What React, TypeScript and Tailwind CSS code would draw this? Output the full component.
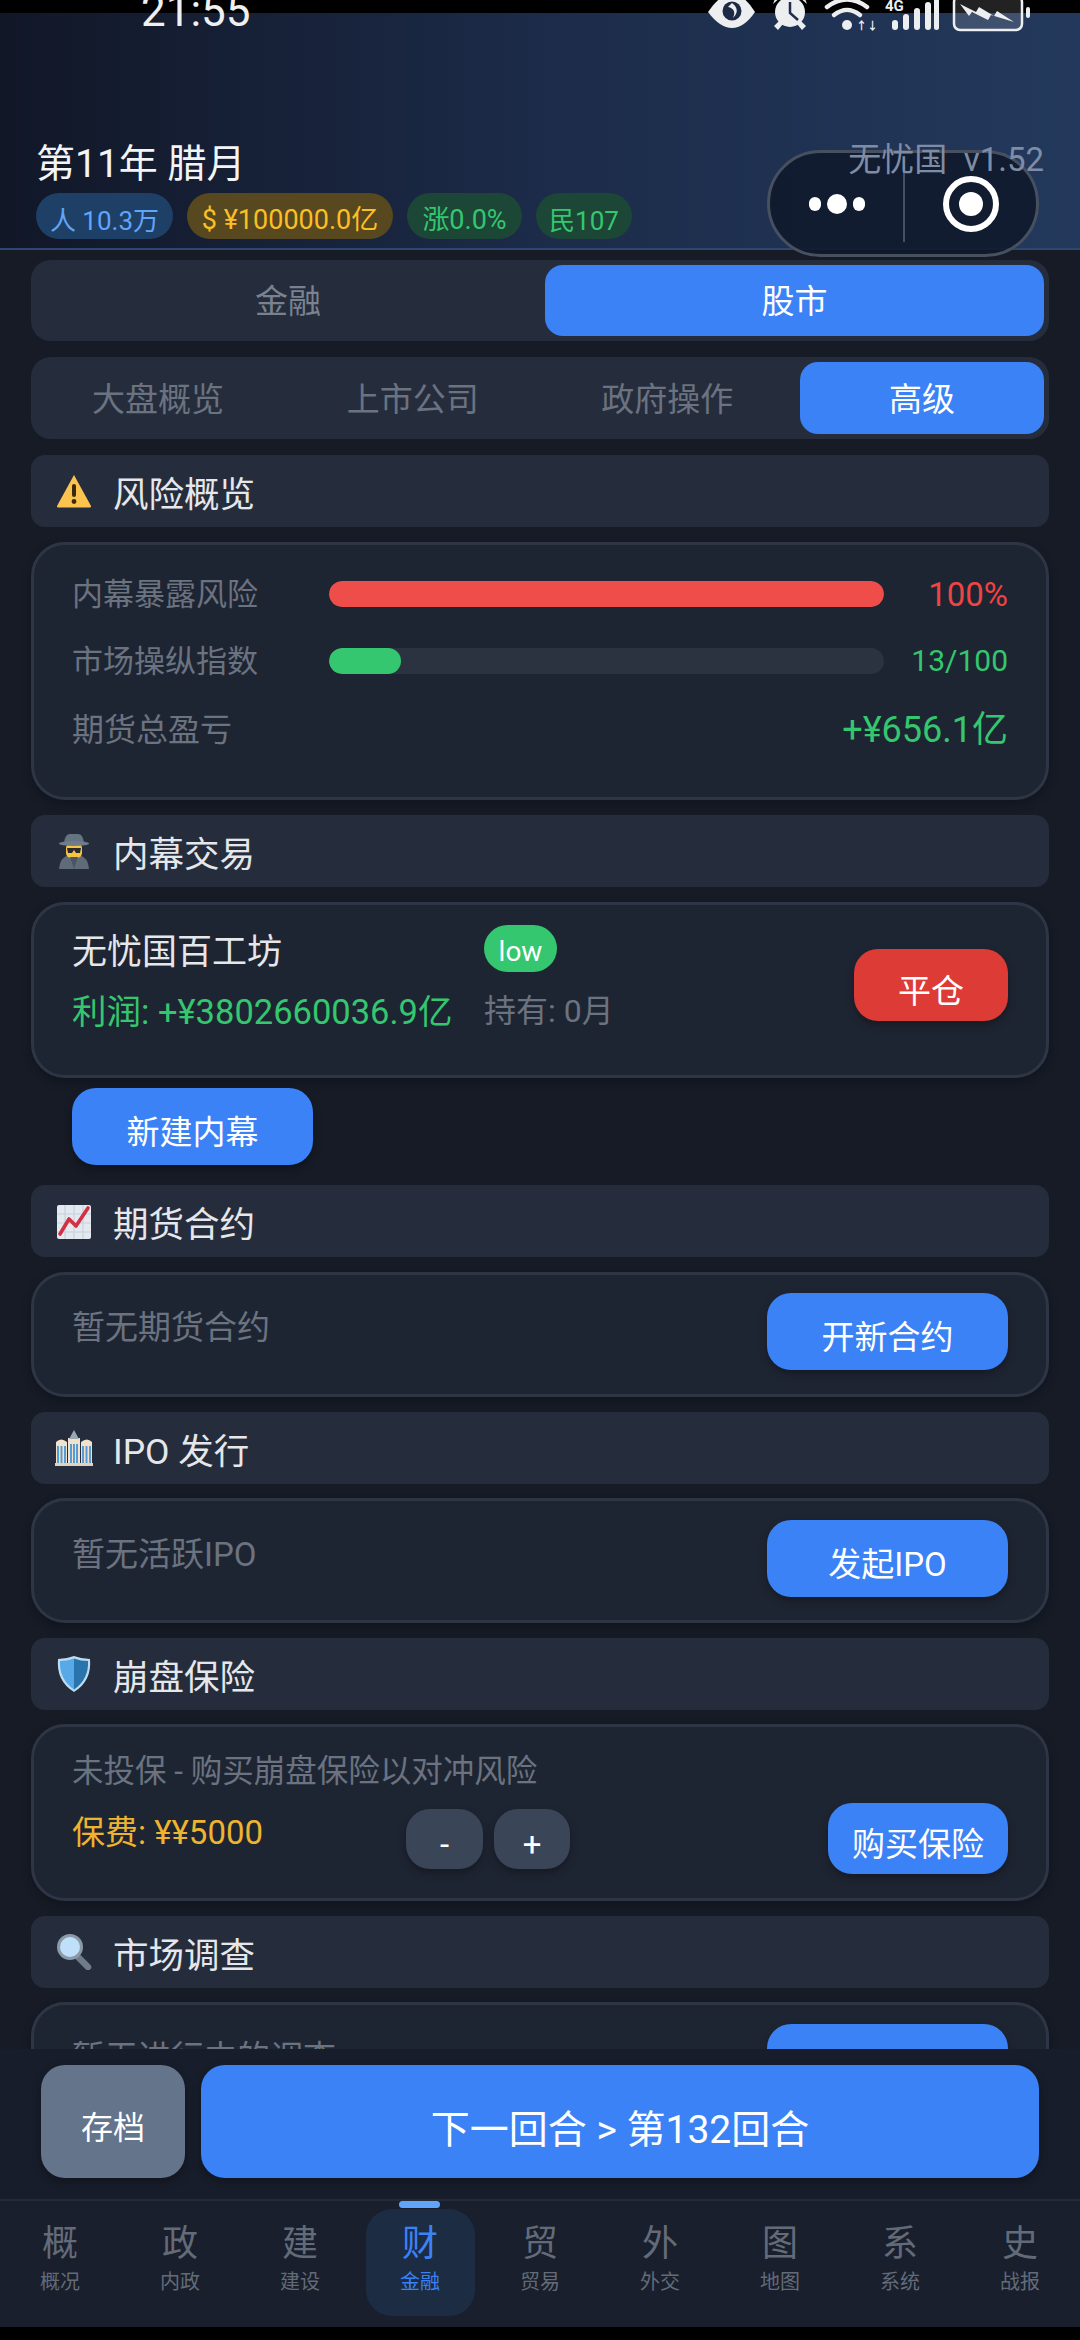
import React from "react";

const FONT = "font-['Roboto','Noto_Sans_CJK_SC',sans-serif]";

function Warn() {
  return (
    <svg width="36" height="36" viewBox="0 0 36 36" className="shrink-0">
      <path d="M18 2 L35 33 Q35.5 34.5 33.5 34.5 L2.5 34.5 Q.5 34.5 1 33 Z" fill="#fcc44f" />
      <rect x="16" y="11" width="4" height="13" rx="2" fill="#3a2a12" />
      <circle cx="18" cy="28.5" r="2.4" fill="#3a2a12" />
    </svg>
  );
}
function Spy() {
  return (
    <svg width="36" height="36" viewBox="0 0 36 36" className="shrink-0">
      <path d="M3 36 Q4 24 13 22 L23 22 Q32 24 33 36 Z" fill="#5f6b78" />
      <rect x="10" y="10" width="16" height="15" rx="5" fill="#f6c445" />
      <path d="M11 15 L25 15 L24 20 L20 20 L18 17 L16 20 L12 20 Z" fill="#2c2a28" />
      <path d="M8 10 Q9 1 14 1 L22 1 Q27 1 28 10 Z" fill="#667380" />
      <ellipse cx="18" cy="10.5" rx="15" ry="2.6" fill="#6f7c89" />
      <path d="M14 24 L22 24 L18 36 Z" fill="#4b5662" />
    </svg>
  );
}
function Chart() {
  return (
    <svg width="36" height="36" viewBox="0 0 36 36" className="shrink-0">
      <rect x="1" y="2" width="34" height="34" rx="2" fill="#e3e9ee" />
      <path d="M9 2V36M18 2V36M27 2V36M1 11H35M1 20H35M1 29H35" stroke="#c6d2dc" strokeWidth="1.2" />
      <path d="M4 31 L13 16 L20 23 L32 5" fill="none" stroke="#d32f45" strokeWidth="3.6" strokeLinejoin="round" strokeLinecap="round" />
    </svg>
  );
}
function Bank() {
  return (
    <svg width="38" height="36" viewBox="0 0 38 36" className="shrink-0">
      <path d="M1 12 Q6 7 12 12 L12 36 L1 36Z" fill="#f0e2cc" />
      <path d="M26 12 Q32 7 37 12 L37 36 L26 36Z" fill="#f0e2cc" />
      <rect x="13" y="8" width="12" height="28" fill="#f0e2cc" />
      <path d="M14 9 L19 0 L24 9 Z" fill="#9aa8b6" />
      <path d="M3 16V33M6.5 16V33M10 16V33M16 14V33M19 14V33M22 14V33M28 16V33M31.500 16V33M35 16V33" stroke="#5a9bd6" strokeWidth="2" />
      <rect x="0" y="33" width="38" height="3" fill="#e0d2bb" />
    </svg>
  );
}
function Shield() {
  return (
    <svg width="36" height="38" viewBox="0 0 36 38" className="shrink-0">
      <path d="M18 1 Q26 4 34 4 Q36 26 18 37 Q0 26 2 4 Q10 4 18 1Z" fill="#bcdcf2" />
      <path d="M18 3.500 Q11 6 4 6 Q3 24 18 34.500Z" fill="#58a9e8" />
      <path d="M18 3.500 Q25 6 32 6 Q33 24 18 34.500Z" fill="#2a74ad" />
    </svg>
  );
}
function Glass() {
  return (
    <svg width="38" height="36" viewBox="0 0 38 36" className="shrink-0">
      <path d="M23 23 L33 33" stroke="#707d89" strokeWidth="6.500" strokeLinecap="round" />
      <circle cx="15" cy="13" r="13" fill="#8b9aa8" />
      <circle cx="15" cy="13" r="10" fill="#bfe0f8" />
    </svg>
  );
}

function Head({ icon, title, className = "" }: { icon: React.ReactNode; title: string; className?: string }) {
  return (
    <div className={`flex h-[72px] shrink-0 items-center gap-[21px] rounded-[14px] bg-[#252d3d] pl-[25px] ${className}`}>
      <div className="flex w-[36px] justify-center">{icon}</div>
      <span className="pt-[10px] text-[35.500px] leading-none text-[#e5e7eb]">{title}</span>
    </div>
  );
}

function Btn({ children, className = "" }: { children: React.ReactNode; className?: string }) {
  return (
    <div className={`flex items-center justify-center rounded-[24px] pt-[12px] text-[33px] leading-none text-white shadow-[0_4px_8px_rgba(0,0,0,0.3)] ${className}`}>
      {children}
    </div>
  );
}

function Card({ children, className = "" }: { children: React.ReactNode; className?: string }) {
  return (
    <div className={`shrink-0 rounded-[34px] border-[3px] border-[#2e3645] bg-[#1e2532] shadow-[0_4px_10px_rgba(0,0,0,0.25)] ${className}`}>
      {children}
    </div>
  );
}

function Bar({ label, pct, color, value, valueClass }: { label: string; pct: number; color: string; value: string; valueClass: string }) {
  return (
    <div className="flex h-[26px] items-center">
      <span className="w-[257px] text-[31px] leading-none text-[#6b7280]">{label}</span>
      <div className="h-[26px] w-[555px] overflow-hidden rounded-[13px] bg-[#2b3240]">
        <div className={`h-full rounded-[13px] ${color}`} style={{ width: `${pct}%` }} />
      </div>
      <span className={`flex-1 text-right leading-none ${valueClass}`}>{value}</span>
    </div>
  );
}

const NAV = [
  ["概", "概况"],
  ["政", "内政"],
  ["建", "建设"],
  ["财", "金融"],
  ["贸", "贸易"],
  ["外", "外交"],
  ["图", "地图"],
  ["系", "系统"],
  ["史", "战报"],
];

function Pill({ children, className }: { children: React.ReactNode; className: string }) {
  return (
    <div className={`flex h-[46px] items-center justify-center rounded-[23px] pt-[9px] leading-none ${className}`}>
      {children}
    </div>
  );
}

export default function App() {
  return (
    <div className={`${FONT} relative flex h-[2340px] w-[1080px] flex-col overflow-hidden bg-[#161b26]`}>
      {/* system status bar */}
      <div className="h-[13px] shrink-0 bg-black" />
      <div className="absolute left-0 top-0 z-20 h-[32px] w-full overflow-hidden">
        <span className="absolute left-[141px] top-[-11px] text-[44px] leading-[44px] text-[#eef0f2]">21:55</span>
        <svg className="absolute left-[700px] top-0" width="340" height="32" viewBox="0 0 340 32">
          <g fill="#eceef0">
            <path d="M8 12 Q20 -6 32 -6 Q44 -6 55 12 Q44 28 32 28 Q20 28 8 12Z" />
            <circle cx="90" cy="12" r="15" />
            <path d="M74 26 L79 21 L83 24 L78 30Z M106 26 L101 21 L97 24 L102 30Z" />
            <path d="M73 4 L82 -4 L76 -4Z M107 4 L98 -4 L104 -4Z" />
            <circle cx="147" cy="25" r="5" />
            <rect x="192" y="20" width="6" height="10" rx="3" />
            <rect x="203" y="14" width="6" height="16" rx="3" />
            <rect x="214" y="8" width="6" height="22" rx="3" />
            <rect x="225" y="2" width="6" height="28" rx="3" />
            <rect x="234" y="-4" width="5" height="34" rx="2.500" />
            <rect x="326" y="7" width="4" height="11" rx="2" />
          </g>
          <circle cx="32" cy="11" r="9.500" fill="#1c2a45" />
          <path d="M32 3 Q41 10 33 18 Q37 9 28 7Z" fill="#eceef0" />
          <path d="M90 2 L90 13 L98 20" fill="none" stroke="#1e2d4c" strokeWidth="2.500" />
          <g fill="none" stroke="#eceef0" strokeWidth="4.500" strokeLinecap="round">
            <path d="M127 7 Q147 -8 167 7" />
            <path d="M134 15 Q147 5 160 15" />
          </g>
          <text x="185" y="11" fontSize="15" fontWeight="700" fill="#eceef0">4G</text>
          <text x="156" y="30" fontSize="11" fontWeight="700" fill="#eceef0">↑↓</text>
          <rect x="254" y="-4" width="68" height="34" rx="6" fill="#ffffff22" stroke="#eceef0" strokeWidth="2.500" />
          <path d="M260 4 L276 12 L279 7 L294 16 L297 11 L314 22 L291 15 L288 20 L272 12 L269 16Z" fill="#eceef0" />
        </svg>
      </div>

      {/* app header */}
      <div className="relative flex h-[237px] shrink-0 flex-col justify-end border-b-[2px] border-[#2c4670] bg-gradient-to-r from-[#111727] via-[#1c2b49] to-[#23395c] px-[36px] pb-[9px]">
        <div className="flex items-start justify-between">
          <div className="mt-[-1px] text-[39px] leading-none text-[#f3f4f6]">第11年 腊月</div>
          <div className="relative z-10 mt-[-3px] text-[33px] leading-none text-[#7f8ca5]">无忧国&nbsp;&nbsp;v1.52</div>
        </div>
        <div className="mt-[9px] flex gap-[14px]">
          <Pill className="w-[137px] bg-[#1e3f66] text-[26px] text-[#60a5fa]">人 10.3万</Pill>
          <Pill className="w-[206px] bg-[#57481f] text-[27px] text-[#fbbf24]">$ ¥100000.0亿</Pill>
          <Pill className="w-[115px] bg-[#1c4636] text-[27px] text-[#34c76f]">涨0.0%</Pill>
          <Pill className="w-[96px] bg-[#1c4636] text-[26px] text-[#34c76f]">民107</Pill>
        </div>
      </div>

      {/* mini-program capsule */}
      <div className="absolute left-[767px] top-[150px] z-0 flex h-[107px] w-[272px] items-center rounded-[54px] border-[3px] border-[#46505f] bg-[#0f1a2ce6]">
        <div className="flex w-[133px] items-center justify-center gap-[6px] pl-[1px]">
          <span className="h-[14px] w-[12px] rounded-full bg-white" />
          <span className="h-[20px] w-[20px] rounded-full bg-white" />
          <span className="h-[14px] w-[12px] rounded-full bg-white" />
        </div>
        <div className="h-[76px] w-[2px] bg-[#46505f]" />
        <div className="flex flex-1 justify-center">
          <div className="flex h-[56px] w-[56px] items-center justify-center rounded-full border-[6px] border-white">
            <div className="h-[24px] w-[24px] rounded-full bg-white" />
          </div>
        </div>
      </div>

      {/* scrolling content */}
      <div className="flex h-[1799px] shrink-0 flex-col overflow-hidden px-[31px] pt-[10px]">
        <div className="flex h-[81px] shrink-0 rounded-[20px] bg-[#252d3d] p-[5px]">
          <div className="flex flex-1 items-center justify-center pr-[5px] pt-[2px] text-[33px] leading-none text-[#7a8290]">金融</div>
          <div className="flex w-[499px] items-center justify-center rounded-[18px] bg-[#3b82f6] pt-[2px] text-[33px] leading-none text-white">股市</div>
        </div>

        <div className="mt-[16px] grid h-[82px] shrink-0 grid-cols-4 gap-[10.500px] rounded-[20px] bg-[#252d3d] p-[5px]">
          <div className="flex items-center justify-center pt-[2px] text-[33px] leading-none text-[#6b7280]">大盘概览</div>
          <div className="flex items-center justify-center pt-[2px] text-[33px] leading-none text-[#6b7280]">上市公司</div>
          <div className="flex items-center justify-center pt-[2px] text-[33px] leading-none text-[#6b7280]">政府操作</div>
          <div className="flex items-center justify-center rounded-[18px] bg-[#3b82f6] pt-[2px] text-[33px] leading-none text-white">高级</div>
        </div>

        <Head className="mt-[16px]" icon={<Warn />} title="风险概览" />
        <Card className="mt-[15px] h-[258px] px-[38px] pt-[36px]">
          <div className="flex flex-col gap-[41px]">
            <Bar label="内幕暴露风险" pct={100} color="bg-[#ef4d49]" value="100%" valueClass="text-[33px] text-[#ef4444]" />
            <Bar label="市场操纵指数" pct={13} color="bg-[#34c76f]" value="13/100" valueClass="text-[30px] text-[#34c76f]" />
          </div>
          <div className="mt-[38px] flex items-center justify-between">
            <span className="text-[32px] leading-none text-[#6b7280]">期货总盈亏</span>
            <span className="text-[36px] leading-none text-[#34c76f]">+¥656.1亿</span>
          </div>
        </Card>

        <Head className="mt-[15px]" icon={<Spy />} title="内幕交易" />
        <Card className="mt-[15px] flex h-[176px] items-start justify-between px-[38px] pt-[20px]">
          <div className="grid grid-cols-[412px_auto] content-start">
            <div className="mt-[10px] text-[35px] leading-none text-[#e5e7eb]">无忧国百工坊</div>
            <div className="flex h-[47px] w-[73px] items-center justify-center rounded-[24px] bg-[#34c76f] pt-[6px] text-[28px] leading-none text-white">low</div>
            <div className="mt-[23px] whitespace-nowrap text-[34.500px] leading-none text-[#34c76f]">利润: +¥3802660036.9亿</div>
            <div className="mt-[23px] text-[32px] leading-none text-[#6b7280]">持有: 0月</div>
          </div>
          <Btn className="mt-[24px] h-[72px] w-[154px] bg-[#dc3b36]">平仓</Btn>
        </Card>
        <Btn className="ml-[41px] mt-[10px] h-[77px] w-[241px] shrink-0 bg-[#3b82f6]">新建内幕</Btn>

        <Head className="mt-[20px]" icon={<Chart />} title="期货合约" />
        <Card className="mt-[15px] flex h-[125px] items-start justify-between px-[38px] pt-[18px]">
          <span className="mt-[18px] text-[33px] leading-none text-[#6b7280]">暂无期货合约</span>
          <Btn className="h-[77px] w-[241px] bg-[#3b82f6]">开新合约</Btn>
        </Card>

        <Head className="mt-[15px]" icon={<Bank />} title="IPO 发行" />
        <Card className="mt-[14px] flex h-[125px] items-start justify-between px-[38px] pt-[19px]">
          <span className="mt-[18px] text-[33px] leading-none text-[#6b7280]">暂无活跃IPO</span>
          <Btn className="h-[77px] w-[241px] bg-[#3b82f6]">发起IPO</Btn>
        </Card>

        <Head className="mt-[15px]" icon={<Shield />} title="崩盘保险" />
        <Card className="mt-[14px] h-[177px] px-[38px] pt-[29px]">
          <div className="text-[31.500px] leading-none text-[#6b7280]">未投保 - 购买崩盘保险以对冲风险</div>
          <div className="mt-[16px] flex items-start">
            <span className="mt-[12px] w-[334px] text-[33px] leading-none text-[#eeb42f]">保费: ¥¥5000</span>
            <div className="mt-[5px] flex gap-[11px]">
              <Btn className="h-[60px] w-[77px] rounded-[20px] bg-[#3a4557]">-</Btn>
              <Btn className="h-[60px] w-[76px] rounded-[20px] bg-[#3a4557]">+</Btn>
            </div>
            <Btn className="ml-auto mt-[-1px] h-[71px] w-[180px] bg-[#3b82f6]">购买保险</Btn>
          </div>
        </Card>

        <Head className="mt-[15px]" icon={<Glass />} title="市场调查" />
        <Card className="mt-[14px] flex h-[125px] items-start justify-between px-[38px] pt-[19px]">
          <span className="mt-[17px] text-[33px] leading-none text-[#6b7280]">暂无进行中的调查</span>
          <Btn className="h-[77px] w-[241px] bg-[#3b82f6]">发起调查</Btn>
        </Card>
      </div>

      {/* action bar */}
      <div className="flex h-[150px] shrink-0 gap-[16px] bg-[#171d2a] px-[41px] pt-[16px]">
        <div className="flex h-[113px] w-[144px] items-center justify-center rounded-[24px] bg-[#64748b] pt-[12px] text-[32px] leading-none text-white shadow-[0_4px_10px_rgba(0,0,0,0.3)]">存档</div>
        <div className="flex h-[113px] flex-1 items-center justify-center rounded-[24px] bg-[#3b82f6] pt-[18px] text-[39px] leading-none text-white shadow-[0_4px_10px_rgba(0,0,0,0.3)]">下一回合 &gt; 第132回合</div>
      </div>

      {/* bottom nav */}
      <div className="grid h-[128px] shrink-0 grid-cols-9 border-t-[2px] border-[#232a38] bg-[#191f2c] pt-[8px]">
        {NAV.map(([glyph, label], i) => (
          <div key={label} className="relative flex h-[107px] justify-center">
            {i === 3 && <div className="absolute left-[39px] top-[-8px] h-[7px] w-[41px] rounded-full bg-[#60a5fa]" />}
            <div className={`flex w-[109px] flex-col items-center rounded-[26px] pt-[17px] ${i === 3 ? "bg-[#1c2c42]" : ""}`}>
              <span className={`text-[36px] leading-none ${i === 3 ? "text-[#3b82f6]" : "text-[#636b79]"}`}>{glyph}</span>
              <span className={`mt-[10px] text-[20px] leading-none ${i === 3 ? "text-[#3b82f6]" : "text-[#636b79]"}`}>{label}</span>
            </div>
          </div>
        ))}
      </div>

      <div className="flex-1 bg-black" />
    </div>
  );
}
